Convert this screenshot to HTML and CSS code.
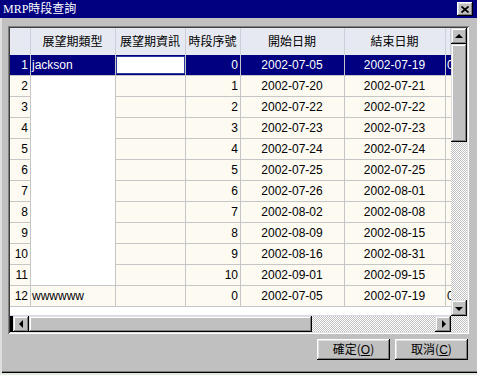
FILE: index.html
```html
<!doctype html>
<html lang="zh-Hant">
  <head>
    <meta charset="UTF-8" />
    <title>MRP時段查詢</title>
    <link rel="stylesheet" href="styles.css">
  </head>
  <body>
    <div class="window">
      <div class="titlebar">
        <span class="title">MRP時段查詢</span>
        <button class="close-btn" title="關閉">
          <svg width="8" height="7" viewBox="0 0 8 7"><path d="M0.5 0.5 L7.5 6.5 M7.5 0.5 L0.5 6.5" stroke="#000" stroke-width="1.7" fill="none"/></svg>
        </button>
      </div>

      <div class="client">
        <div class="grid-frame">
          <div class="grid-area">
            <div class="table-view">
              <div class="data-grid">
                <!-- header -->
                <div class="cell head"></div>
                <div class="cell head">展望期類型</div>
                <div class="cell head">展望期資訊</div>
                <div class="cell head">時段序號</div>
                <div class="cell head">開始日期</div>
                <div class="cell head">結束日期</div>
                <div class="cell head"></div>

                <!-- row 1 (selected) -->
                <div class="cell num sel">1</div>
                <div class="cell sel">jackson</div>
                <div class="cell sel edit-cell"><div class="editor"></div></div>
                <div class="cell num sel">0</div>
                <div class="cell date sel">2002-07-05</div>
                <div class="cell date sel">2002-07-19</div>
                <div class="cell part sel">0</div>

                <div class="cell num">2</div>
                <div class="cell white merge"></div>
                <div class="cell"></div>
                <div class="cell num">1</div>
                <div class="cell date">2002-07-20</div>
                <div class="cell date">2002-07-21</div>
                <div class="cell part"></div>

                <div class="cell num">3</div>
                <div class="cell"></div>
                <div class="cell num">2</div>
                <div class="cell date">2002-07-22</div>
                <div class="cell date">2002-07-22</div>
                <div class="cell part"></div>

                <div class="cell num">4</div>
                <div class="cell"></div>
                <div class="cell num">3</div>
                <div class="cell date">2002-07-23</div>
                <div class="cell date">2002-07-23</div>
                <div class="cell part"></div>

                <div class="cell num">5</div>
                <div class="cell"></div>
                <div class="cell num">4</div>
                <div class="cell date">2002-07-24</div>
                <div class="cell date">2002-07-24</div>
                <div class="cell part"></div>

                <div class="cell num">6</div>
                <div class="cell"></div>
                <div class="cell num">5</div>
                <div class="cell date">2002-07-25</div>
                <div class="cell date">2002-07-25</div>
                <div class="cell part"></div>

                <div class="cell num">7</div>
                <div class="cell"></div>
                <div class="cell num">6</div>
                <div class="cell date">2002-07-26</div>
                <div class="cell date">2002-08-01</div>
                <div class="cell part"></div>

                <div class="cell num">8</div>
                <div class="cell"></div>
                <div class="cell num">7</div>
                <div class="cell date">2002-08-02</div>
                <div class="cell date">2002-08-08</div>
                <div class="cell part"></div>

                <div class="cell num">9</div>
                <div class="cell"></div>
                <div class="cell num">8</div>
                <div class="cell date">2002-08-09</div>
                <div class="cell date">2002-08-15</div>
                <div class="cell part"></div>

                <div class="cell num">10</div>
                <div class="cell"></div>
                <div class="cell num">9</div>
                <div class="cell date">2002-08-16</div>
                <div class="cell date">2002-08-31</div>
                <div class="cell part"></div>

                <div class="cell num">11</div>
                <div class="cell"></div>
                <div class="cell num">10</div>
                <div class="cell date">2002-09-01</div>
                <div class="cell date">2002-09-15</div>
                <div class="cell part"></div>

                <div class="cell num">12</div>
                <div class="cell">wwwwww</div>
                <div class="cell"></div>
                <div class="cell num">0</div>
                <div class="cell date">2002-07-05</div>
                <div class="cell date">2002-07-19</div>
                <div class="cell part">0</div>
              </div>
            </div>

            <div class="vscroll">
              <div class="sb-btn"><span class="arrow up"></span></div>
              <div class="sb-thumb vthumb"></div>
              <div class="sb-track"></div>
              <div class="sb-btn"><span class="arrow down"></span></div>
            </div>
          </div>

          <div class="hscroll-row">
            <div class="hscroll">
              <div class="sb-stub"></div>
              <div class="sb-btn"><span class="arrow left"></span></div>
              <div class="sb-thumb hthumb"></div>
              <div class="sb-track"></div>
              <div class="sb-btn"><span class="arrow right"></span></div>
            </div>
            <div class="sb-corner"></div>
          </div>
        </div>

        <div class="buttons">
          <button class="btn">確定(<u>O</u>)</button>
          <button class="btn">取消(<u>C</u>)</button>
        </div>
      </div>
    </div>
  </body>
</html>
```

FILE: styles.css
```css
* {
  margin: 0;
  padding: 0;
  box-sizing: border-box;
}

body {
  background: #e3eae1;
  font-family: 'Liberation Sans', 'Noto Sans CJK TC', sans-serif;
  font-size: 12px;
  color: #000;
}

.window {
  width: 477px;
  height: 373px;
  background: #c0c0c0;
  display: flex;
  flex-direction: column;
  box-shadow: inset 0 -1px #000, inset 0 -2px #808080;
}

/* title bar */
.titlebar {
  height: 18px;
  flex: none;
  background: #000080;
  color: #fff;
  display: flex;
  align-items: center;
  justify-content: space-between;
  padding: 0 4px 0 3px;
}

.title {
  font-family: 'Liberation Serif', 'Noto Sans CJK TC', serif;
  font-size: 12px;
  line-height: 18px;
}

.close-btn {
  width: 16px;
  height: 14px;
  border: none;
  background: #c0c0c0;
  display: flex;
  align-items: center;
  justify-content: center;
  box-shadow: inset -1px -1px #000, inset 1px 1px #fff, inset -2px -2px #808080, inset 2px 2px #dfdfdf;
}

/* client area */
.client {
  flex: 1;
  padding: 8px 8px 0 6px;
  border-left: 2px solid #dfdfdf;
}

.grid-frame {
  width: 461px;
  height: 308px;
  padding: 2px;
  background: #c0c0c0;
  box-shadow: inset 1px 1px #808080, inset -1px -1px #fff, inset 2px 2px #404040, inset -2px -2px #dfdfdf;
}

.grid-area {
  display: flex;
  height: 288px;
}

.table-view {
  width: 441px;
  background: #fff;
  border-bottom: 1px solid #d8d8ea;
  overflow: hidden;
}

.data-grid {
  display: grid;
  grid-template-columns: 21px 85px 70px 55px 104px 101px 5px;
  grid-template-rows: 27px repeat(12, 21px);
}

.cell {
  background: #fdfaf2;
  border-right: 1px solid #c6c6c6;
  border-bottom: 1px solid #c6c6c6;
  display: flex;
  align-items: center;
  padding: 0 2px 0 1px;
  line-height: 14px;
  white-space: nowrap;
  overflow: hidden;
}

.cell.head {
  background: #e6e9f1;
  border-right-color: #cdd0da;
  border-bottom-color: #e6e9f1;
  justify-content: center;
  font-family: 'Noto Sans CJK TC', sans-serif;
}

.cell.num {
  justify-content: flex-end;
}

.cell.date {
  justify-content: center;
}

.cell.white {
  background: #fff;
}

.cell.merge {
  grid-row: span 10;
}

.cell.part {
  border-right: none;
  padding: 0 0 0 1px;
}

.cell.sel {
  background: #000080;
  color: #fff;
}

.cell.edit-cell {
  padding: 1px 0 1px 0;
}

.editor {
  width: 100%;
  height: 100%;
  background: #fff;
  border: 1px solid #2a3a9a;
}

/* scroll bars */
.vscroll {
  width: 16px;
  display: flex;
  flex-direction: column;
}

.sb-btn,
.sb-thumb {
  background: #c0c0c0;
  box-shadow: inset -1px -1px #000, inset 1px 1px #dfdfdf, inset -2px -2px #808080, inset 2px 2px #fff;
}

.sb-btn {
  width: 16px;
  height: 16px;
  flex: none;
  display: flex;
  align-items: center;
  justify-content: center;
}

.sb-track,
.sb-corner {
  flex: 1;
  background-color: #fff;
  background-image: conic-gradient(#c0c0c0 25%, #fff 0 50%, #c0c0c0 0 75%, #fff 0);
  background-size: 2px 2px;
}

.vthumb {
  height: 98px;
  flex: none;
}

.hscroll-row {
  display: flex;
  height: 16px;
}

.hscroll {
  width: 441px;
  display: flex;
}

.sb-stub {
  width: 3px;
  background: #000;
}

.hthumb {
  width: 283px;
  flex: none;
}

.sb-corner {
  width: 16px;
  flex: none;
}

.arrow {
  width: 0;
  height: 0;
  border: 4px solid transparent;
}

.arrow.up {
  border-top: none;
  border-bottom-color: #000;
  margin-top: -1px;
}

.arrow.down {
  border-bottom: none;
  border-top-color: #000;
  margin-top: 1px;
}

.arrow.left {
  border-left: none;
  border-right-color: #000;
  margin-left: -1px;
}

.arrow.right {
  border-right: none;
  border-left-color: #000;
  margin-left: 1px;
}

/* dialog buttons */
.buttons {
  display: flex;
  justify-content: flex-end;
  gap: 5px;
  margin-top: 5px;
  padding-right: 1px;
}

.btn {
  width: 73px;
  height: 21px;
  border: none;
  background: #c0c0c0;
  font-family: 'Noto Sans CJK TC', sans-serif;
  font-size: 12px;
  line-height: 14px;
  color: #000;
  box-shadow: inset -1px -1px #000, inset 1px 1px #fff, inset -2px -2px #808080, inset 2px 2px #dfdfdf;
}

.btn u {
  font-family: 'Liberation Sans', sans-serif;
}
```
